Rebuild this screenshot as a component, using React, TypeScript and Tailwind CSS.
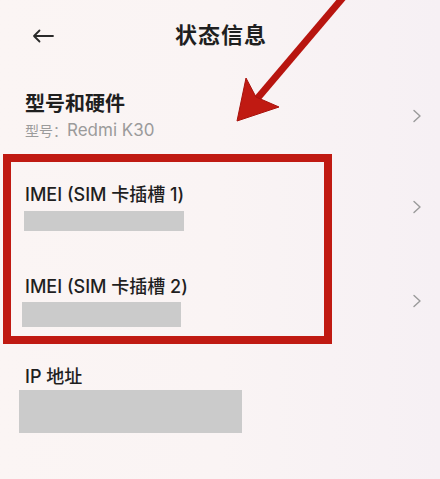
import React from 'react';

const font = { fontFamily: 'Inter, "Noto Sans CJK SC", sans-serif' };

const Chevron = () => (
  <svg width="10" height="14" viewBox="0 0 10 14" className="flex-shrink-0">
    <path d="M2 1.5 L8 7 L2 12.5" fill="none" stroke="#9a9a9a" strokeWidth="1.4" strokeLinecap="round" strokeLinejoin="round" />
  </svg>
);

const Row: React.FC<{ className?: string; children: React.ReactNode; chevron?: boolean }> = ({
  className = '',
  children,
  chevron = true,
}) => (
  <div className={`flex items-center pl-[25px] pr-[18px] ${className}`}>
    <div className="flex-grow min-w-0 flex flex-col">{children}</div>
    {chevron && <Chevron />}
  </div>
);

export default function App() {
  return (
    <div
      className="relative w-[440px] h-[479px] overflow-hidden bg-gradient-to-r from-[#fbf5f4] via-[#faf4f4] to-[#f6f0f4] text-[#1f1f1f]"
      style={font}
    >
      {/* header */}
      <div className="relative h-[70px] flex items-center justify-center">
        <svg width="22" height="14" viewBox="0 0 22 14" className="absolute left-[32px] top-[29px]">
          <path d="M21 7 H2 M7.5 1.5 L2 7 L7.5 12.5" fill="none" stroke="#2a2a2a" strokeWidth="1.8" strokeLinecap="round" strokeLinejoin="round" />
        </svg>
        <h1 className="text-[22px] leading-[30px] font-semibold tracking-[1px] ml-[2px]">状态信息</h1>
      </div>

      <Row className="mt-[20px]">
        <div className="text-[20px] leading-[28px] font-semibold">型号和硬件</div>
        <div className="text-[14px] leading-[20px] mt-[2px] text-[#9b9b9b]">
          型号：<span className="text-[17px]">Redmi K30</span>
        </div>
      </Row>

      <Row className="mt-[41px]">
        <div className="text-[18px] leading-[26px] font-medium">IMEI (SIM 卡插槽 1)</div>
        <div className="mt-[3px] -ml-[1px] w-[160px] h-[20px] bg-[#cbcbcb]" />
      </Row>

      <Row className="mt-[43px]">
        <div className="text-[18px] leading-[26px] font-medium">IMEI (SIM 卡插槽 2)</div>
        <div className="mt-[2px] -ml-[3px] w-[159px] h-[25px] bg-[#cbcbcb]" />
      </Row>

      <Row className="mt-[37px]" chevron={false}>
        <div className="text-[18px] leading-[26px] font-medium">IP 地址</div>
        <div className="-ml-[6px] w-[223px] h-[43px] bg-[#cbcbcb]" />
      </Row>

      {/* annotation: red box */}
      <div className="absolute left-[3px] top-[154px] w-[329px] h-[190px] border-[8px] border-[#c01a12]" />

      {/* annotation: red arrow */}
      <svg width="440" height="479" viewBox="0 0 440 479" className="absolute left-0 top-0 pointer-events-none">
        <line x1="346" y1="-6" x2="256" y2="100" stroke="#b8150f" strokeWidth="7" />
        <path d="M237 121 L246 78 L256 97 L279 107 Z" fill="#c01a12" stroke="#a8120c" strokeWidth="1" strokeLinejoin="round" />
      </svg>
    </div>
  );
}
